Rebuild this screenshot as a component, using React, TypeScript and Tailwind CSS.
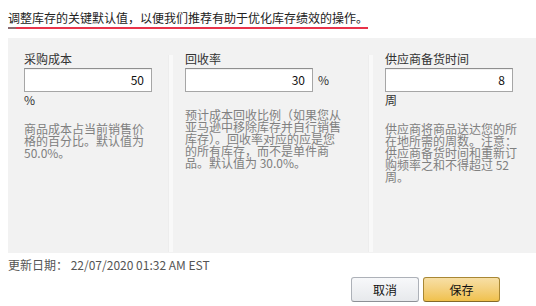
import React from "react";

const font = { fontFamily: '"Noto Sans CJK SC", "Noto Sans", sans-serif' };

function Input({ value }: { value: string }) {
  return (
    <div className="w-[128px] h-[24px] bg-white border border-[#a6a6a6] border-t-[#8f8f8f] flex items-center justify-end pr-[7px] text-[12px] text-[#111] leading-none shadow-[inset_0_1px_0_rgba(0,0,0,0.06)]">
      {value}
    </div>
  );
}

function Divider() {
  return <div className="w-[5px] shrink-0 mt-[17px] mb-[1px] bg-[#f9f9f9] border-l border-[#ededed]" />;
}

export default function App() {
  return (
    <div className="w-[536px] h-[306px] bg-white text-[#333] overflow-hidden" style={font}>
      <div className="pl-[8px] pt-[10px]">
        <div className="text-[12px] leading-[16px] text-[#222]">
          调整库存的关键默认值，以便我们推荐有助于优化库存绩效的操作。
        </div>
        <div className="mt-[1px] flex h-[2px] w-[360px]">
          <div className="w-[8px] bg-[#8c6a6e]" />
          <div className="flex-1 bg-[#e8334a]" />
        </div>
      </div>

      <div className="ml-[8px] mt-[9px] h-[215px] bg-[#f2f2f2] flex">
        {/* column 1 */}
        <div className="w-[160px] shrink-0 pl-[16px] pt-[13px]">
          <div className="text-[12px] leading-[16px] mb-[1px]">采购成本</div>
          <Input value="50" />
          <div className="text-[12px] leading-[16px]">%</div>
          <div className="mt-[15px] w-[128px] text-[12px] leading-[12px] text-[#808080]">
            商品成本占当前销售价格的百分比。默认值为 50.0%。
          </div>
        </div>
        <Divider />
        {/* column 2 */}
        <div className="w-[195px] shrink-0 pl-[12px] pt-[13px]">
          <div className="text-[12px] leading-[16px] mb-[1px]">回收率</div>
          <div className="flex items-center gap-[5px]">
            <Input value="30" />
            <span className="text-[12px] leading-[16px]">%</span>
          </div>
          <div className="mt-[17px] w-[156px] text-[12px] leading-[12px] text-[#808080]">
            预计成本回收比例（如果您从亚马逊中移除库存并自行销售库存）。回收率对应的应是您的所有库存，而不是单件商品。默认值为 30.0%。
          </div>
        </div>
        <Divider />
        {/* column 3 */}
        <div className="flex-1 pl-[12px] pt-[13px]">
          <div className="text-[12px] leading-[16px] mb-[1px]">供应商备货时间</div>
          <Input value="8" />
          <div className="text-[12px] leading-[16px]">周</div>
          <div className="mt-[15px] w-[136px] text-[12px] leading-[12px] text-[#808080]">
            供应商将商品送达您的所在地所需的周数。注意：供应商备货时间和重新订购频率之和不得超过 52 周。
          </div>
        </div>
      </div>

      <div className="pl-[8px] mt-[4px] text-[12px] leading-[16px] text-[#555]">
        更新日期： 22/07/2020 01:32 AM EST
      </div>

      <div className="mt-[4px] flex justify-end pr-[36px] gap-[4px]">
        <button className="w-[68px] h-[25px] rounded-[3px] border border-[#adb1b8] border-b-[#8d9096] bg-gradient-to-b from-[#f7f8fa] to-[#e7e9ec] text-[12px] text-[#111] leading-none">
          取消
        </button>
        <button className="w-[77px] h-[25px] rounded-[3px] border border-[#a88734] border-b-[#846a29] bg-gradient-to-b from-[#f7dfa5] to-[#f0c14b] text-[12px] text-[#111] leading-none">
          保存
        </button>
      </div>
    </div>
  );
}
